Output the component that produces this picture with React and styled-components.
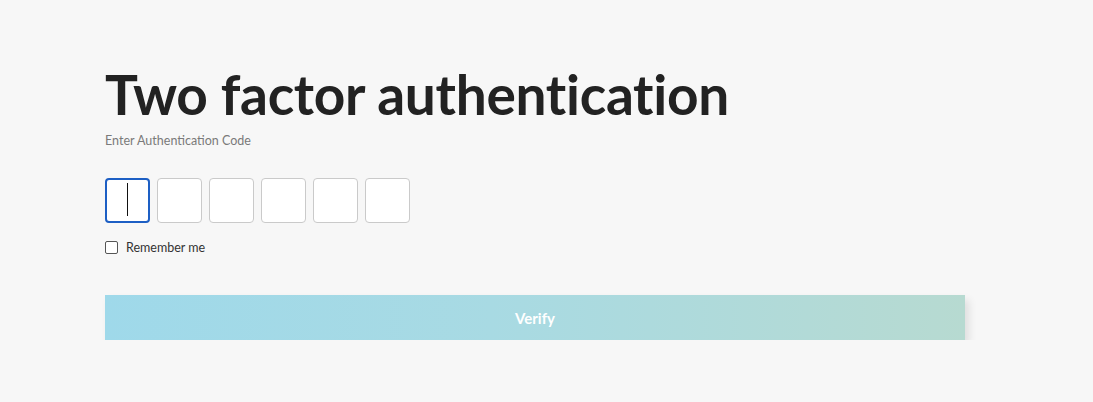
import React, { useEffect, useRef } from "react";
import styled, { createGlobalStyle } from "styled-components";

const GlobalStyle = createGlobalStyle`
  html, body {
    margin: 0;
    padding: 0;
    background: #f7f7f7;
    font-family: Lato, "Liberation Sans", sans-serif;
  }
`;

const Page = styled.main`
  padding: 60px 0 0 105px;
`;

const Title = styled.h1`
  margin: 0;
  font-size: 55px;
  line-height: 68px;
  font-weight: 700;
  color: #222;
  letter-spacing: -0.3px;
`;

const Subtitle = styled.p`
  margin: 5px 0 0;
  font-size: 12.5px;
  line-height: 16px;
  color: #7a7a7a;
`;

const CodeRow = styled.div`
  display: flex;
  gap: 7px;
  margin-top: 29px;
`;

const Slot = styled.div`
  position: relative;
  width: 45px;
  height: 45px;

  &::after {
    content: "";
    display: ${(p) => (p.$active ? "block" : "none")};
    position: absolute;
    left: 22px;
    top: 5px;
    width: 1px;
    height: 33px;
    background: #111;
  }
`;

const CodeBox = styled.input`
  box-sizing: border-box;
  width: 100%;
  height: 100%;
  border: ${(p) => (p.$active ? "2px solid #1d5fc4" : "1px solid #cacaca")};
  border-radius: 4px;
  background: #fff;
  text-align: center;
  font-family: Lato, "Liberation Sans", sans-serif;
  font-size: 34px;
  color: #222;
  caret-color: transparent;
  outline: none;
  padding: 0;
`;

const CheckRow = styled.label`
  display: flex;
  align-items: center;
  gap: 8px;
  margin-top: 17px;
  font-size: 12.5px;
  color: #333;
`;

const Box = styled.span`
  box-sizing: border-box;
  width: 13px;
  height: 13px;
  border: 1px solid #555;
  border-radius: 2px;
  background: #fff;
`;

const VerifyButton = styled.button`
  display: block;
  width: 860px;
  height: 45px;
  margin-top: 40px;
  border: none;
  background: linear-gradient(90deg, #9fd9ea 0%, #a8dae3 45%, #b7dad1 100%);
  box-shadow: 4px 5px 8px rgba(0, 0, 0, 0.1);
  color: #fff;
  font-family: Lato, "Liberation Sans", sans-serif;
  font-size: 15px;
  font-weight: 700;
`;

export default function App() {
  const first = useRef(null);
  useEffect(() => {
    first.current && first.current.focus();
  }, []);

  return (
    <>
      <GlobalStyle />
      <Page>
        <Title>Two factor authentication</Title>
        <Subtitle>Enter Authentication Code</Subtitle>
        <CodeRow>
          {[0, 1, 2, 3, 4, 5].map((i) => (
            <Slot key={i} $active={i === 0}>
              <CodeBox
                ref={i === 0 ? first : null}
                $active={i === 0}
                maxLength={1}
              />
            </Slot>
          ))}
        </CodeRow>
        <CheckRow>
          <Box />
          Remember me
        </CheckRow>
        <VerifyButton>Verify</VerifyButton>
      </Page>
    </>
  );
}
